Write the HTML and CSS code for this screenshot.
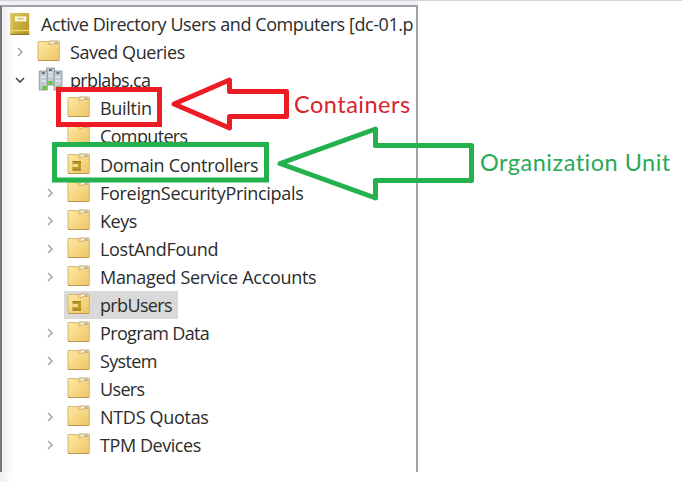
FILE: index.html
```
<!DOCTYPE html>
<html lang="en">
<head>
<meta charset="utf-8">
<title>Active Directory Users and Computers</title>
<link rel="stylesheet" href="styles.css">
</head>
<body>
<svg class="defs" aria-hidden="true">
  <defs>
    <linearGradient id="gold" x1="0" y1="0" x2="1" y2="1"><stop offset="0" stop-color="#ffe9a6"/><stop offset="1" stop-color="#edc563"/></linearGradient>
    <linearGradient id="book" x1="0" y1="0" x2="1" y2="1"><stop offset="0" stop-color="#dfca62"/><stop offset="1" stop-color="#b39120"/></linearGradient>
    <symbol id="folder" viewBox="0 0 24 22">
      <path d="M11.5 4V1.7q0-.8.8-.8h9q1 0 1 1V6h-10z" fill="#ead6a0" stroke="#c5a96b" stroke-width=".8"/>
      <path d="M14 2.2h6.5v1.5H14z" fill="#fff"/><path d="M17.7 2.2h2.8v1.5h-2.8z" fill="#7e9eb0"/>
      <path d="M1 2.5q0-1 1-1h8.3l2 3.2h2.3l1.4-1.2h5.3q1 0 1 1v15.2q0 .8-.8.8H1.800q-.8 0-.8-.8z" fill="url(#gold)" stroke="#ceb06b" stroke-width=".9"/>
      <path d="M1 20.500h21.200" stroke="#b99852"/>
    </symbol>
    <symbol id="unit" viewBox="0 0 24 22">
      <use href="#folder"/>
      <path d="M5.500 8.500h8.500v9H5.500z" fill="#bb9a28"/><path d="M5.500 11h5.500v3H5.500z" fill="#f3df87"/><path d="M5.500 8.700h8.500M5.500 17h8.500" stroke="#8e721c"/>
    </symbol>
    <symbol id="console" viewBox="0 0 20 24">
      <path d="M.5 1h18.700v22H.5z" fill="url(#book)"/><path d="M.5 1H3v22H.5z" fill="#d6bd55"/>
      <path d="M4.500 4h12.300v5.800H4.500z" fill="#fffbd9" stroke="#c4a93c" stroke-width=".7"/><path d="M7.300 6.800h6.500" stroke="#b8a34b"/>
      <path d="M.5 18.500h18.700" stroke="#eed978" stroke-width="1.3"/><path d="M.5 22.500h18.700" stroke="#927721"/>
    </symbol>
    <symbol id="domain" viewBox="0 0 24 24">
      <g fill="#c1cbd0" stroke="#7f8d96" stroke-width=".8"><path d="M8 1h8v17H8z"/><path d="M.8 4h8v19h-8zM15.500 4h8v19h-8z"/></g>
      <path d="M10.500 3h3M3.300 6h3M18 6h3" stroke="#42545f" stroke-width="1.4"/>
      <path d="M9.500 6h5M9.500 9h5M2.300 10h5M2.300 14h5M17 10h5M17 14h5" stroke="#f3f7f8" stroke-width="1.2"/>
      <path d="M10 14h4v4h-4zM4 19h4v4H4zM18 19h4v4h-4z" fill="#62c832"/>
    </symbol>
    <symbol id="closed" viewBox="0 0 8 10"><path d="M2 1l4 4-4 4" fill="none" stroke="#a4a4a4" stroke-width="1.5"/></symbol>
    <symbol id="open" viewBox="0 0 10 8"><path d="M1 2l4 4 4-4" fill="none" stroke="#4c4c4c" stroke-width="1.7"/></symbol>
  </defs>
</svg>
<main class="screen">
  <section class="panel">
    <ul class="tree">
      <li class="row root"><svg class="console"><use href="#console"/></svg><span class="label">Active Directory Users and Computers [dc-01.p</span></li>
      <li class="row top"><svg class="arrow"><use href="#closed"/></svg><svg class="icon"><use href="#folder"/></svg><span class="label">Saved Queries</span></li>
      <li class="row top"><svg class="arrow expanded"><use href="#open"/></svg><svg class="icon domain"><use href="#domain"/></svg><span class="label tight">prblabs.ca</span></li>
      <li class="row"><i class="arrow"></i><svg class="icon"><use href="#folder"/></svg><span class="label loose">Builtin</span></li>
      <li class="row"><i class="arrow"></i><svg class="icon"><use href="#folder"/></svg><span class="label tight">Computers</span></li>
      <li class="row"><i class="arrow"></i><svg class="icon"><use href="#unit"/></svg><span class="label loose">Domain Controllers</span></li>
      <li class="row"><svg class="arrow"><use href="#closed"/></svg><svg class="icon"><use href="#folder"/></svg><span class="label loose">ForeignSecurityPrincipals</span></li>
      <li class="row"><svg class="arrow"><use href="#closed"/></svg><svg class="icon"><use href="#folder"/></svg><span class="label">Keys</span></li>
      <li class="row"><svg class="arrow"><use href="#closed"/></svg><svg class="icon"><use href="#folder"/></svg><span class="label loose">LostAndFound</span></li>
      <li class="row"><svg class="arrow"><use href="#closed"/></svg><svg class="icon"><use href="#folder"/></svg><span class="label loose">Managed Service Accounts</span></li>
      <li class="row"><i class="arrow"></i><span class="selected"><svg class="icon"><use href="#unit"/></svg><span class="label tight">prbUsers</span></span></li>
      <li class="row"><svg class="arrow"><use href="#closed"/></svg><svg class="icon"><use href="#folder"/></svg><span class="label tight">Program Data</span></li>
      <li class="row"><svg class="arrow"><use href="#closed"/></svg><svg class="icon"><use href="#folder"/></svg><span class="label tight">System</span></li>
      <li class="row"><i class="arrow"></i><svg class="icon"><use href="#folder"/></svg><span class="label tight">Users</span></li>
      <li class="row"><svg class="arrow"><use href="#closed"/></svg><svg class="icon"><use href="#folder"/></svg><span class="label loose">NTDS Quotas</span></li>
      <li class="row"><svg class="arrow"><use href="#closed"/></svg><svg class="icon"><use href="#folder"/></svg><span class="label">TPM Devices</span></li>
    </ul>
  </section>
  <svg class="marks" viewBox="0 0 682 482">
    <g fill="none" stroke="#ed1c24" stroke-width="5" stroke-linejoin="round">
      <path d="M58.500 89.500h101v35h-101z" stroke-linejoin="miter"/>
      <path d="M174 104l55.500-24v11.500h57v25h-57V128z"/>
    </g>
    <g fill="none" stroke="#22b14c" stroke-width="5" stroke-linejoin="round">
      <path d="M54.500 144.500h212v35.500h-212z" stroke-linejoin="miter"/>
      <path d="M280 163.500l95.500-34.500v16.500h96v35h-96V198z"/>
    </g>
  </svg>
  <span class="note containers">Containers</span>
  <span class="note unit">Organization Unit</span>
</main>
</body>
</html>
```
FILE: styles.css
```
body { margin: 0; background: #fff; }
.defs { position: absolute; width: 0; height: 0; }
.screen {
  position: relative;
  box-sizing: border-box;
  width: 682px;
  height: 482px;
  overflow: hidden;
  border-top: 1px solid #d3d3dc;
  background: linear-gradient(90deg, #f0f0f0, #fff 14px);
}
.panel {
  box-sizing: border-box;
  width: 418px;
  height: 471px;
  padding-top: 4px;
  background: #f0f0f5;
}
.tree {
  box-sizing: border-box;
  height: 467px;
  margin: 0;
  padding: 3px 0 0;
  list-style: none;
  border: solid #a0a1a8;
  border-width: 2px 2px 0;
  border-left-color: #74757b;
  background: linear-gradient(90deg, #eee, #fff 14px);
}
.row { display: flex; align-items: center; height: 28.1px; padding-left: 44px; }
.row.top { padding-left: 14px; }
.row.root { padding-left: 8px; }
.arrow { flex: none; width: 8px; height: 10px; margin-right: 13px; }
.arrow.expanded { width: 10px; height: 8px; margin: 0 12px 0 -1px; }
.icon { flex: none; width: 24px; height: 22px; margin: -2px 9px 0 0; }
.icon.domain { width: 25px; height: 24px; margin: -3px 7px 0 1px; }
.console { width: 20px; height: 24px; margin: -1px 11px 0 0; }
.selected {
  display: flex;
  align-items: center;
  height: 28px;
  width: 114px;
  box-sizing: border-box;
  margin-left: -3px;
  padding-left: 3px;
  background: #d9d9d9;
}
.label {
  font: 18px/28px "Open Sans", sans-serif;
  letter-spacing: -0.43px;
  color: #2c2c2c;
  white-space: nowrap;
}
.label.loose { letter-spacing: -0.3px; }
.label.tight { letter-spacing: -0.65px; }
.marks { position: absolute; inset: -1px 0 0; width: 682px; height: 482px; }
.note {
  position: absolute;
  font: 23.5px/28px Lato, sans-serif;
  letter-spacing: 0.5px;
  font-variant-ligatures: none;
  white-space: nowrap;
}
.note.containers { left: 294px; top: 89px; color: #d9232e; }
.note.unit { left: 480px; top: 147px; color: #2aa957; }
```
